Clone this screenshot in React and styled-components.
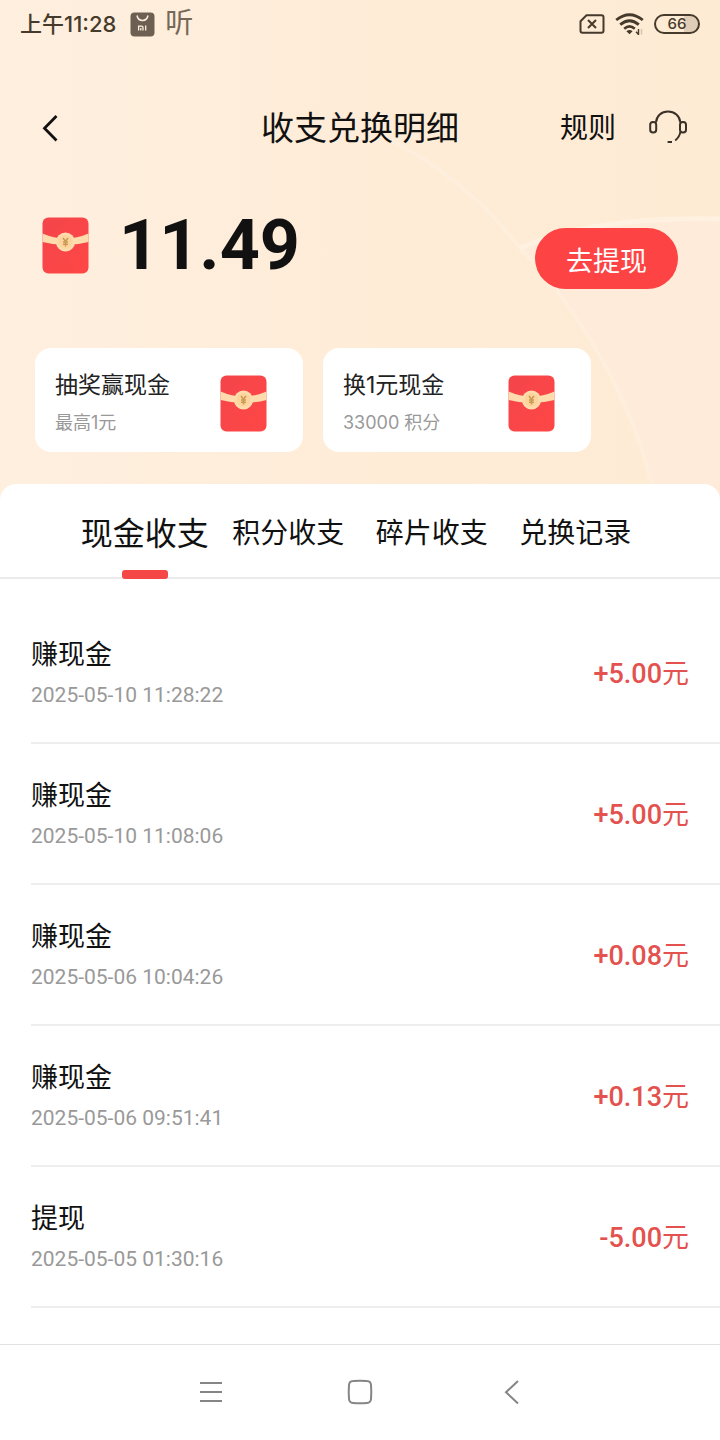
import React, { useState } from 'react';
import styled, { createGlobalStyle } from 'styled-components';

const GlobalStyle = createGlobalStyle`
  * {
    box-sizing: border-box;
  }

  body {
    margin: 0;
    background: #fff;
    color: #111;
    font-family: Roboto, 'Noto Sans CJK SC', sans-serif;
  }

  button {
    margin: 0;
    padding: 0;
    border: 0;
    background: none;
    color: inherit;
    font: inherit;
    cursor: pointer;
  }

  svg {
    display: block;
  }
`;

const Page = styled.div`
  display: flex;
  flex-direction: column;
  min-height: 100vh;
`;

const Hero = styled.header`
  position: relative;
  isolation: isolate;
  padding-bottom: 48px;
  background: linear-gradient(90deg, #ffefdf 0%, #feecd7 55%, #feebd4 100%);
`;

const Backdrop = styled.svg`
  position: absolute;
  inset: 0;
  z-index: -1;
  width: 100%;
  height: 100%;
`;

const StatusBar = styled.div`
  display: flex;
  align-items: center;
  justify-content: space-between;
  height: 48px;
  padding: 0 20px;
  color: #453a2c;
`;

const StatusGroup = styled.div`
  display: flex;
  align-items: center;
  gap: 10px;
`;

const Clock = styled.span`
  padding-right: 4px;
  font-family: Inter, 'Noto Sans CJK SC', sans-serif;
  font-size: 22px;
  font-weight: 500;
  line-height: 32px;
`;

const Listening = styled.span`
  color: #766858;
  font-size: 28px;
  font-weight: 400;
  line-height: 32px;
`;

const Battery = styled.span`
  width: 46px;
  height: 20px;
  border: 2px solid #453a2c;
  border-radius: 10px;
  background: linear-gradient(90deg, transparent 66%, #dfcdb7 66%);
  font-family: Inter, sans-serif;
  font-size: 15px;
  font-weight: 500;
  line-height: 16px;
  text-align: center;
`;

const TitleBar = styled.div`
  display: grid;
  grid-template-columns: 1fr auto 1fr;
  align-items: center;
  height: 88px;
  margin-top: 36px;
  padding: 0 32px;
`;

const Title = styled.h1`
  margin: 0;
  padding-top: 2px;
  font-size: 33px;
  font-weight: 400;
  line-height: 48px;
`;

const BackButton = styled.button`
  padding: 8px;
`;

const Actions = styled.div`
  display: flex;
  align-items: center;
  justify-content: flex-end;
  gap: 32px;
`;

const RulesButton = styled.button`
  padding-top: 2px;
  font-size: 28px;
  line-height: 40px;
`;

const BalanceRow = styled.div`
  display: flex;
  align-items: flex-end;
  justify-content: space-between;
  margin-top: 29px;
  padding: 0 42px;
`;

const Balance = styled.div`
  display: flex;
  align-items: center;
  gap: 30px;
  font-size: 70px;
  font-weight: 700;
  line-height: 88px;
`;

const WithdrawButton = styled.button`
  height: 61px;
  padding: 2px 31px 0;
  border-radius: 31px;
  background: #fd4343;
  color: #fff;
  font-size: 27px;
`;

const Cards = styled.div`
  display: flex;
  gap: 20px;
  margin-top: 59px;
  padding: 0 35px;
`;

const Card = styled.button`
  display: flex;
  align-items: center;
  justify-content: space-between;
  width: 268px;
  height: 104px;
  padding: 6px 36px 0 20px;
  border-radius: 16px;
  background: #fff;
  font-family: Inter, 'Noto Sans CJK SC', sans-serif;
  text-align: left;
`;

const CardText = styled.span`
  display: flex;
  flex-direction: column;
  gap: 4px;
`;

const CardTitle = styled.span`
  color: #222;
  font-size: 23px;
  line-height: 36px;
`;

const CardHint = styled.span`
  color: #999;
  font-size: 18px;
  line-height: 32px;
`;

const Panel = styled.main`
  position: relative;
  flex: 1;
  margin-top: -16px;
  border-radius: 16px 16px 0 0;
  background: #fff;
`;

const Tabs = styled.div`
  display: grid;
  grid-template-columns: repeat(4, 1fr);
  height: 95px;
  padding: 0 73px;
  border-bottom: 2px solid #ebebeb;
`;

const Tab = styled.button`
  position: relative;
  height: 93px;
  padding-top: 6px;
  color: #111;
  font-size: ${({ $active }) => ($active ? 32 : 28)}px;
  line-height: 48px;
  white-space: nowrap;

  &::after {
    content: '';
    position: absolute;
    bottom: -2px;
    left: 50%;
    display: ${({ $active }) => ($active ? 'block' : 'none')};
    width: 46px;
    height: 9px;
    margin-left: -23px;
    border-radius: 3px;
    background: #f54846;
  }
`;

const Records = styled.ul`
  margin: 0;
  padding: 24px 0 0 31px;
  list-style: none;
`;

const Record = styled.li`
  display: flex;
  align-items: center;
  justify-content: space-between;
  height: 141px;
  padding-right: 31px;
  border-bottom: 2px solid #eee;
`;

const RecordName = styled.div`
  font-size: 27px;
  line-height: 44px;
`;

const RecordTime = styled.time`
  display: block;
  color: #999;
  font-size: 21px;
  line-height: 36px;
`;

const Amount = styled.span`
  padding-top: 2px;
  color: #e3524e;
  font-size: 27px;
  font-weight: 500;
  line-height: 40px;
`;

const Unit = styled.span`
  font-weight: 400;
`;

const SystemNav = styled.nav`
  display: flex;
  align-items: center;
  justify-content: center;
  gap: 122px;
  height: 96px;
  padding-bottom: 2px;
  border-top: 1px solid #e2e2e2;
  color: #858585;
`;

const cards = [
  { title: '抽奖赢现金', hint: '最高1元' },
  { title: '换1元现金', hint: '33000 积分' },
];

const tabs = ['现金收支', '积分收支', '碎片收支', '兑换记录'];

const records = [
  { name: '赚现金', time: '2025-05-10 11:28:22', amount: '+5.00' },
  { name: '赚现金', time: '2025-05-10 11:08:06', amount: '+5.00' },
  { name: '赚现金', time: '2025-05-06 10:04:26', amount: '+0.08' },
  { name: '赚现金', time: '2025-05-06 09:51:41', amount: '+0.13' },
  { name: '提现', time: '2025-05-05 01:30:16', amount: '-5.00' },
];

const RedPacket = () => (
  <svg width="47" height="57" viewBox="0 0 47 57" aria-hidden="true">
    <defs>
      <linearGradient id="packet" x1="0" y1="0" x2="1" y2="1">
        <stop offset="0" stopColor="#f4454b" />
        <stop offset="1" stopColor="#ff4745" />
      </linearGradient>
    </defs>
    <rect x="0.5" y="0.5" width="46" height="56" rx="6" fill="url(#packet)" />
    <path d="M0.5 16.5Q12 21.5 23.5 21.5T46.5 16.5V25Q35 28 23.5 28T0.5 25Z" fill="#ffdcae" />
    <circle cx="23.5" cy="25" r="9.5" fill="#ffdcae" />
    <circle cx="23.5" cy="25" r="7" fill="#fdd49b" />
    <path
      d="M21 21L23.5 24.2L26 21M21 25H26M21 27.3H26M23.5 24.2V29.5"
      fill="none"
      stroke="#c99a55"
      strokeWidth="1.5"
    />
  </svg>
);

const StoreIcon = () => (
  <svg width="25" height="25" viewBox="0 0 25 25" aria-hidden="true">
    <rect x="0.5" y="0.5" width="24" height="24" rx="4" fill="#6d6053" />
    <path d="M7 3.5Q8 8.5 12.5 8.5T18 3.5" fill="none" stroke="#ffefdf" strokeWidth="1.5" />
    <path
      d="M8.6 18.5V14.2H11.6Q13 14.2 13 15.6V18.5M10.8 16V18.5M15.7 13.5V18.5"
      fill="none"
      stroke="#ffefdf"
      strokeWidth="1.3"
    />
  </svg>
);

const NoSimIcon = () => (
  <svg width="26" height="20" viewBox="0 0 26 20" fill="none" stroke="currentColor" aria-hidden="true">
    <path
      d="M7.5 1.2H22.5Q24.5 1.2 24.5 3.2V16.8Q24.5 18.8 22.5 18.8H3.5Q1.5 18.8 1.5 16.8V7.2Z"
      strokeWidth="2"
      strokeLinejoin="round"
    />
    <path d="M9 6L17 14M17 6L9 14" strokeWidth="2" />
  </svg>
);

const WifiIcon = () => (
  <svg width="29" height="22" viewBox="0 0 29 22" fill="none" stroke="currentColor" aria-hidden="true">
    <path d="M1.2 7Q14.5 -3.6 27.8 7" strokeWidth="2.8" />
    <path d="M5.2 11.6Q14.5 3.8 23.8 11.6" strokeWidth="2.8" />
    <path d="M9.2 15.8Q14.5 11 19.8 15.8" strokeWidth="2.6" />
    <path d="M11.4 18.2Q14.5 15.6 17.6 18.2L14.5 21.2Z" fill="currentColor" stroke="none" />
    <path d="M23.5 16V21.5L21 18.8" strokeWidth="1.4" />
    <path d="M26.5 21.5V16" stroke="#d9c6ae" strokeWidth="1.6" />
  </svg>
);

const BackIcon = () => (
  <svg width="20" height="28" viewBox="0 0 20 28" aria-hidden="true">
    <path d="M16.5 2L4.5 14.2L16.5 26.4" fill="none" stroke="#111" strokeWidth="2.8" />
  </svg>
);

const HeadsetIcon = () => (
  <svg width="40" height="36" viewBox="0 0 40 36" fill="none" stroke="#3a3128" strokeWidth="2" aria-hidden="true">
    <path d="M8 12.5C8.5 6 13.5 1.5 20 1.5S31.8 6 32.3 12.5" />
    <rect x="2.2" y="12" width="6" height="10.5" rx="2.8" />
    <rect x="32" y="12" width="6" height="10.5" rx="2.8" />
    <path d="M32.3 22C32 25 30.3 27.8 27.2 30.5M19.6 32H24" />
  </svg>
);

const App = () => {
  const [activeTab, setActiveTab] = useState(0);

  return (
    <Page>
      <GlobalStyle />
      <Hero>
        <Backdrop viewBox="0 0 720 500" preserveAspectRatio="none" aria-hidden="true">
          <path
            d="M520 248C570 226 640 217 720 217V500H655C640 420 590 320 520 248Z"
            fill="#feebda"
            opacity="0.8"
          />
          <path
            d="M390 140C440 165 485 203 520 248C590 320 640 420 655 500"
            fill="none"
            stroke="#fff3e6"
            strokeWidth="4"
            opacity="0.4"
          />
          <path d="M520 248C570 226 640 217 720 219" fill="none" stroke="#fff3e4" strokeWidth="5" opacity="0.7" />
        </Backdrop>

        <StatusBar>
          <StatusGroup>
            <Clock>上午11:28</Clock>
            <StoreIcon />
            <Listening>听</Listening>
          </StatusGroup>
          <StatusGroup>
            <NoSimIcon />
            <WifiIcon />
            <Battery>66</Battery>
          </StatusGroup>
        </StatusBar>

        <TitleBar>
          <div>
            <BackButton type="button" aria-label="返回">
              <BackIcon />
            </BackButton>
          </div>
          <Title>收支兑换明细</Title>
          <Actions>
            <RulesButton type="button">规则</RulesButton>
            <button type="button" aria-label="客服">
              <HeadsetIcon />
            </button>
          </Actions>
        </TitleBar>

        <BalanceRow>
          <Balance>
            <RedPacket />
            <span>11.49</span>
          </Balance>
          <WithdrawButton type="button">去提现</WithdrawButton>
        </BalanceRow>

        <Cards>
          {cards.map(card => (
            <Card key={card.title} type="button">
              <CardText>
                <CardTitle>{card.title}</CardTitle>
                <CardHint>{card.hint}</CardHint>
              </CardText>
              <RedPacket />
            </Card>
          ))}
        </Cards>
      </Hero>

      <Panel>
        <Tabs role="tablist">
          {tabs.map((tab, index) => (
            <Tab
              key={tab}
              type="button"
              role="tab"
              aria-selected={index === activeTab}
              $active={index === activeTab}
              onClick={() => setActiveTab(index)}
            >
              {tab}
            </Tab>
          ))}
        </Tabs>
        <Records>
          {records.map(record => (
            <Record key={record.time}>
              <div>
                <RecordName>{record.name}</RecordName>
                <RecordTime>{record.time}</RecordTime>
              </div>
              <Amount>
                {record.amount}
                <Unit>元</Unit>
              </Amount>
            </Record>
          ))}
        </Records>
      </Panel>

      <SystemNav>
        <button type="button" aria-label="菜单">
          <svg width="30" height="30" viewBox="0 0 30 30" fill="none" stroke="currentColor" strokeWidth="2">
            <path d="M7 6H29M7 15H29M7 24H29" />
          </svg>
        </button>
        <button type="button" aria-label="主页">
          <svg width="30" height="30" viewBox="0 0 30 30" fill="none" stroke="currentColor" strokeWidth="2">
            <path d="M8 4Q15 3.4 22 4Q25.6 4.2 26 8Q26.6 15 26 22Q25.6 25.8 22 26Q15 26.6 8 26Q4.4 25.8 4 22Q3.4 15 4 8Q4.4 4.2 8 4Z" />
          </svg>
        </button>
        <button type="button" aria-label="后退">
          <svg width="30" height="30" viewBox="0 0 30 30" fill="none" stroke="currentColor" strokeWidth="2">
            <path d="M21 4L9 15.2L21 26.5" />
          </svg>
        </button>
      </SystemNav>
    </Page>
  );
};

export default App;
